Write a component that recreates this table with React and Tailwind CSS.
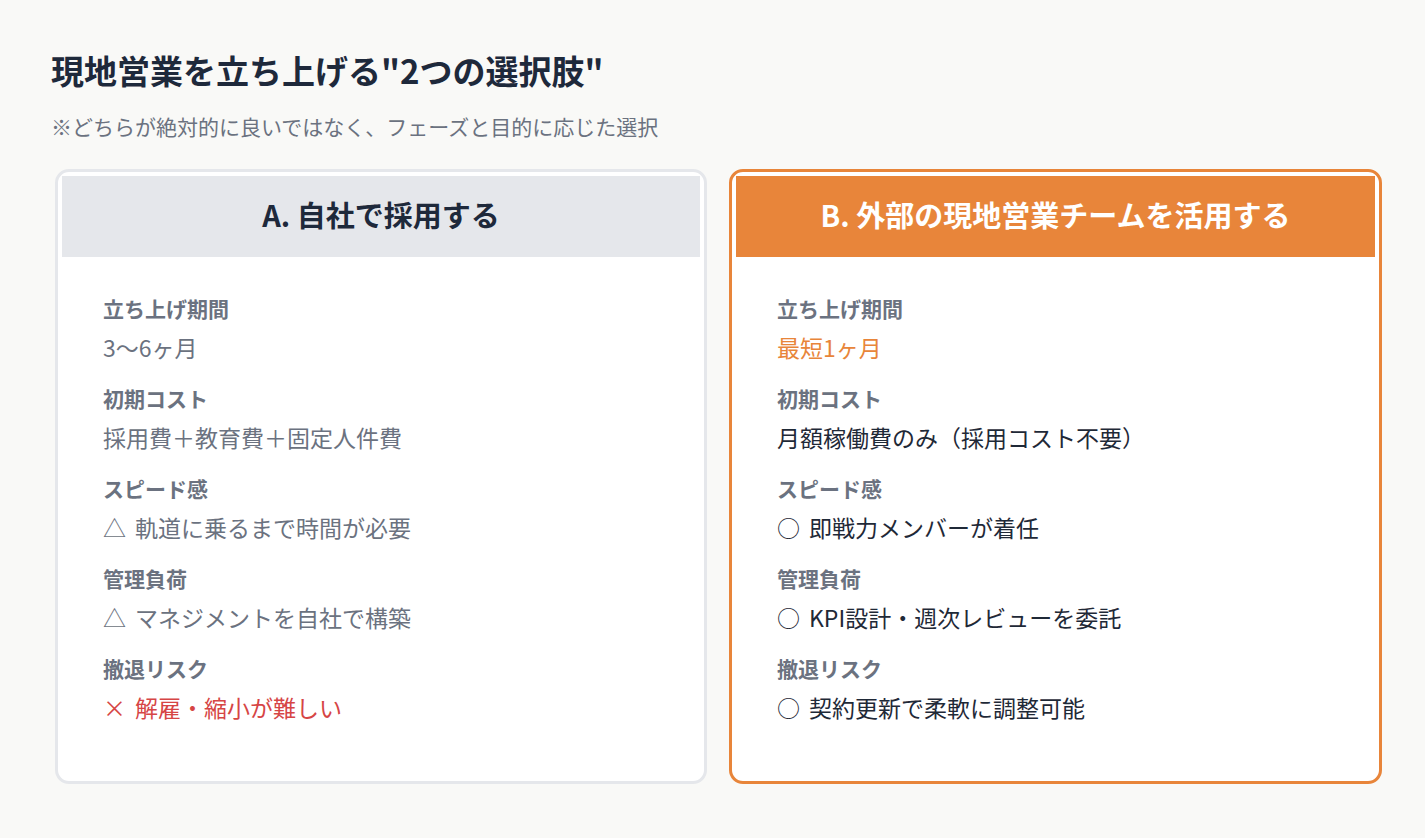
import React from 'react';

const FONT = "font-['Noto_Sans_CJK_JP','Noto_Sans',sans-serif]";

const optionA = [
    { label: '立ち上げ期間', value: '3〜6ヶ月' },
    { label: '初期コスト', value: '採用費＋教育費＋固定人件費' },
    { label: 'スピード感', mark: '△', value: '軌道に乗るまで時間が必要' },
    { label: '管理負荷', mark: '△', value: 'マネジメントを自社で構築' },
    { label: '撤退リスク', mark: '×', value: '解雇・縮小が難しい', tone: 'red' },
];

const optionB = [
    { label: '立ち上げ期間', value: '最短1ヶ月', tone: 'orange' },
    { label: '初期コスト', value: '月額稼働費のみ（採用コスト不要）' },
    { label: 'スピード感', mark: '○', value: '即戦力メンバーが着任' },
    { label: '管理負荷', mark: '○', value: 'KPI設計・週次レビューを委託' },
    { label: '撤退リスク', mark: '○', value: '契約更新で柔軟に調整可能' },
];

const Item = ({ item, muted }) => {
    let color = muted ? 'text-[#6b7280]' : 'text-[#1f2937]';
    if (item.tone === 'red') color = 'text-[#d64545]';
    if (item.tone === 'orange') color = 'text-[#e8853a]';
    return (
        <div>
            <div className="text-[21px] leading-[30px] font-bold text-[#6b7280]">{item.label}</div>
            <div className={`mt-[8px] text-[23px] leading-[32px] ${color}`}>
                {item.mark && <span className="mr-[9px]">{item.mark}</span>}
                {item.value}
            </div>
        </div>
    );
};

const OptionCard = ({ title, items, highlight }) => (
    <div className={`bg-white rounded-[14px] border-[3px] p-1 ${highlight ? 'border-[#e8853a]' : 'border-[#e5e7eb]'}`}>
        <div className={`h-[81px] pb-[4px] flex items-center justify-center text-[29px] font-bold ${highlight ? 'bg-[#e8853a] text-white' : 'bg-[#e5e7eb] text-[#1e293b]'}`}>
            {title}
        </div>
        <div className="px-[41px] pt-[36px] pb-[54px] flex flex-col gap-[20px]">
            {items.map((item) => (
                <Item key={item.label} item={item} muted={!highlight} />
            ))}
        </div>
    </div>
);

const App = () => {
    return (
        <div className={`min-h-[838px] bg-[#f9f9f7] pl-[51px] pt-[48px] ${FONT}`}>
            <h1 className="text-[33px] leading-[44px] font-bold text-[#1e293b]">現地営業を立ち上げる"2つの選択肢"</h1>
            <p className="mt-[19px] text-[21px] leading-[30px] text-[#6b7280]">※どちらが絶対的に良いではなく、フェーズと目的に応じた選択</p>
            <div className="mt-[28px] ml-[4px] grid grid-cols-[652px_653px] gap-[22px]">
                <OptionCard title="A. 自社で採用する" items={optionA} />
                <OptionCard title="B. 外部の現地営業チームを活用する" items={optionB} highlight />
            </div>
        </div>
    );
};

export default App;
